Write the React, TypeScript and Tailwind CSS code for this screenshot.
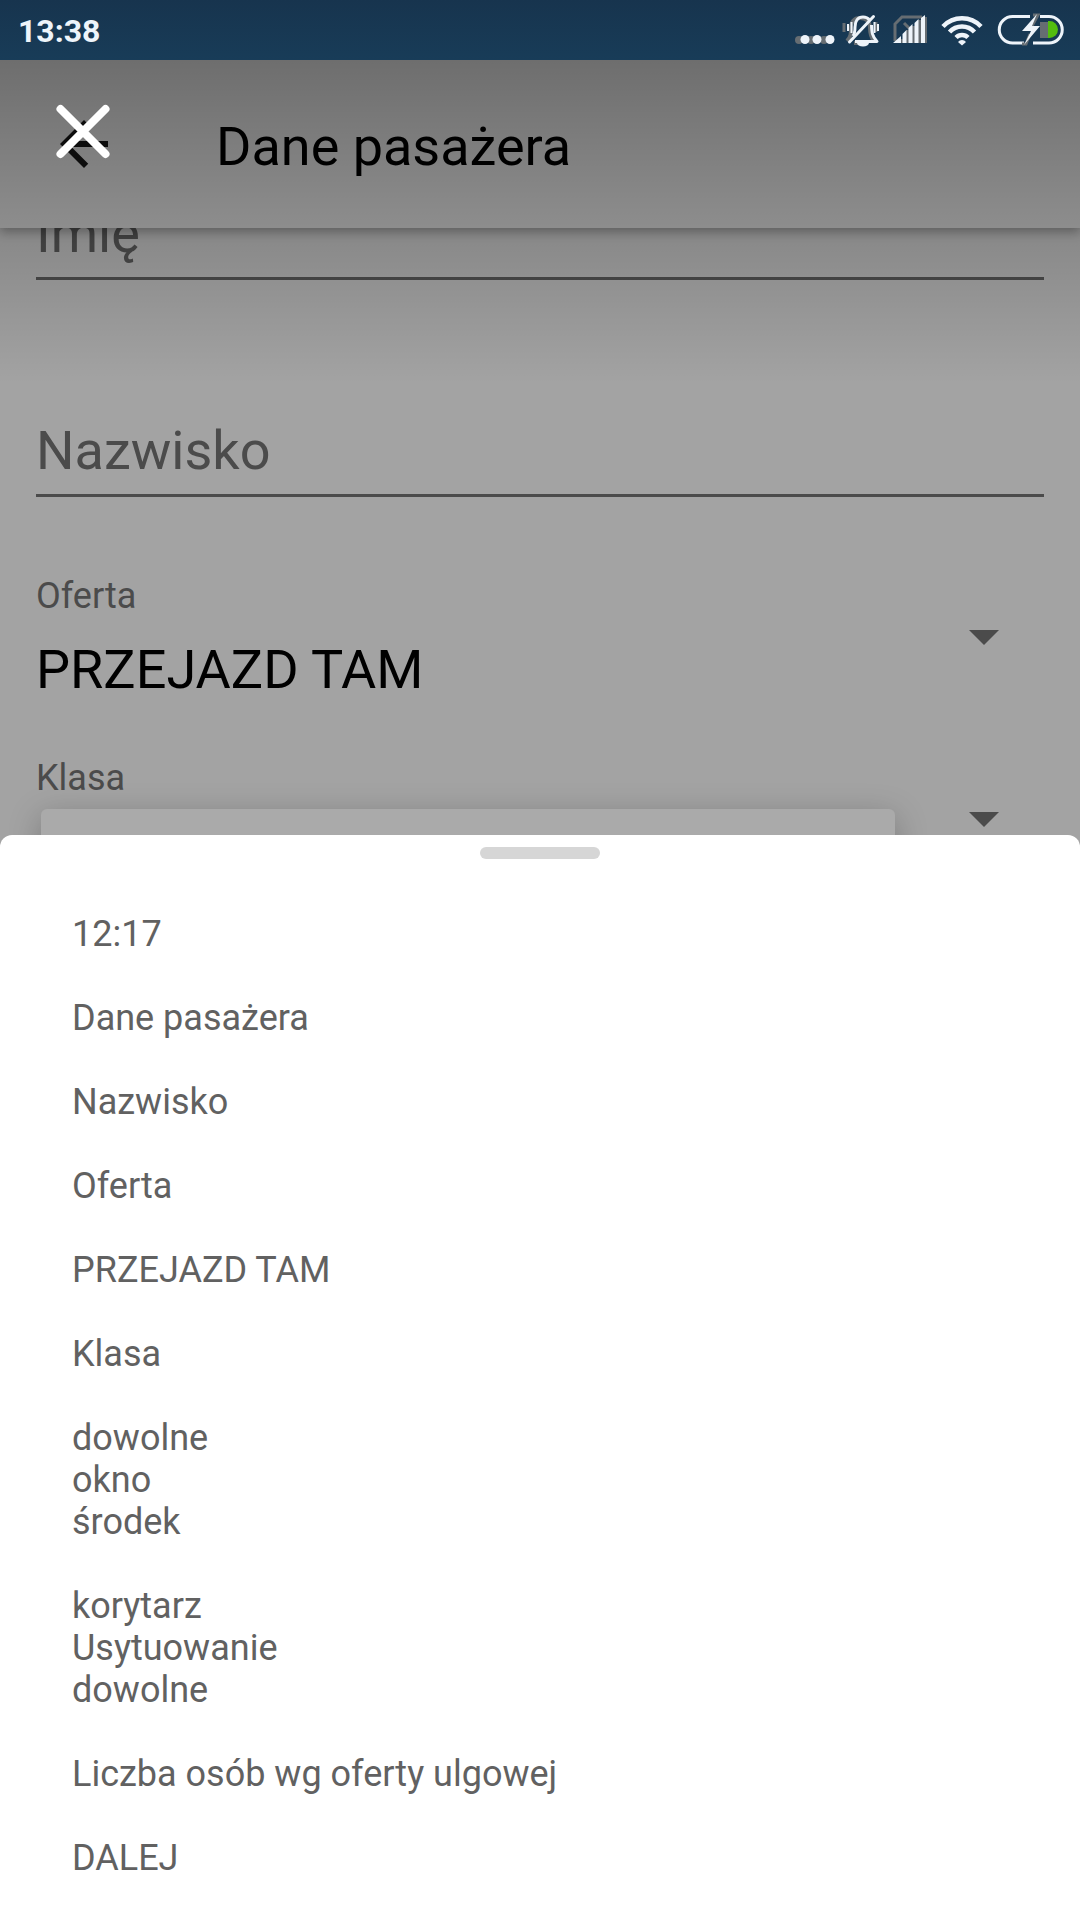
import { useState } from 'react';

interface SelectFieldProps {
  id: string;
  label: string;
  value: string;
}

const SHEET_BLOCKS = [
  ['12:17'],
  ['Dane pasażera'],
  ['Nazwisko'],
  ['Oferta'],
  ['PRZEJAZD TAM'],
  ['Klasa'],
  ['dowolne', 'okno', 'środek'],
  ['korytarz', 'Usytuowanie', 'dowolne'],
  ['Liczba osób wg oferty ulgowej'],
  ['DALEJ'],
];

function StatusIcons() {
  return (
    <div className="flex items-center gap-3.5" aria-hidden>
      <svg width="40" height="60" viewBox="0 0 40 60">
        <g fill="#666d72">
          <circle cx="4" cy="40" r="4" />
          <circle cx="16" cy="40" r="4" />
          <circle cx="29" cy="40" r="4" />
        </g>
        <g fill="#eef4fa">
          <circle cx="10" cy="39.5" r="4.500" />
          <circle cx="22" cy="39.5" r="4.500" />
          <circle cx="35" cy="39.5" r="4.500" />
        </g>
      </svg>
      <svg width="30" height="60" viewBox="8 0 30 60" className="overflow-visible" fill="none">
        <g stroke="#666d72" strokeWidth="4">
          <path d="M6 41c4-4 4-8 4-13 0-6 3-10 9-10s10 4 10 10c0 5 1 9 4 13" />
          <path d="M3 23v9M35 22v10" strokeWidth="3" />
          <path d="M13 43h8" strokeWidth="4" />
        </g>
        <g stroke="#eef4fa" strokeWidth="3" strokeLinejoin="round">
          <path d="M12 36c2-3 2-6 2-9 0-6 3-10 8-10 3 0 5 1 6.500 3M30.500 25c.3 7 .5 11 5.500 16.500H14" />
          <path d="M8.500 42 32.500 16.500" strokeLinecap="round" />
          <path d="M7 24v7M10.500 22v11M33.500 22v11M37 24v7" strokeWidth="2" />
        </g>
        <path d="M16 43h12a6 3.500 0 0 1-12 0z" fill="#eef4fa" />
      </svg>
      <svg width="34" height="60" viewBox="0 0 34 60">
        <path d="M2 41V24l7-7h20M11 23l6 6" fill="none" stroke="#666d72" strokeWidth="3" />
        <path d="M5 39h6v4H5zM13 30h3v13h-3zM19 26h4v17h-4zM25 20h4v23h-4zM31 17h3v26h-3z" fill="#666d72" />
        <path d="M0 43l8-7v7zM9.500 34l4-4v13h-4zM15.500 28l4-4v19h-4zM21.500 23l4-4v24h-4zM28 18l4-3v28h-4z" fill="#eef4fa" />
      </svg>
      <svg width="42" height="60" viewBox="0 0 42 60" fill="none" stroke="#eef4fa" strokeWidth="4.500">
        <path d="M2 26.500a26 26 0 0 1 38 0M8.500 32a17 17 0 0 1 25 0M15 37.500a8.500 8.500 0 0 1 12 0" />
        <path d="M21 45.500l-4-3.500a5 5 0 0 1 8 0z" fill="#eef4fa" stroke="none" />
      </svg>
      <svg width="68" height="60" viewBox="0 0 68 60" fill="none">
        <path
          d="M33 16.500H15.500a13 13 0 0 0 0 26.500H27M43 16.500h9a13 13 0 0 1 0 26.500H36"
          stroke="#eef4fa"
          strokeWidth="3"
        />
        <path d="M43 22h8v16h-8z" fill="#666d72" />
        <path d="M51 21h1.500a8.500 8.500 0 0 1 0 17H51z" fill="#53bd0f" />
        <path d="M36 15h5l-6 11M33 34l-4 10h-4" stroke="#666d72" strokeWidth="3" />
        <path d="M40 14 25 31h9l-7 14 16-19h-8z" fill="#eef4fa" />
      </svg>
    </div>
  );
}

function TextField({ name }: { name: string }) {
  return (
    <input
      type="text"
      name={name}
      aria-label={name}
      placeholder={name}
      className="block h-[79px] w-full shrink-0 border-b-3 border-[#4b4b4b] bg-transparent pb-3 text-[54px] leading-[64px] text-black outline-none placeholder:text-[#4b4b4b]"
    />
  );
}

function SelectField({ id, label, value }: SelectFieldProps) {
  return (
    <div className="flex shrink-0 items-start pr-[45px]">
      <div className="min-w-0 flex-1">
        <label htmlFor={id} className="block text-4xl leading-[42px] text-[#4b4b4b]">
          {label}
        </label>
        <select id={id} className="mt-[21px] block h-16 w-full appearance-none bg-transparent text-[54px] leading-[64px] text-black outline-none">
          <option>{value}</option>
        </select>
      </div>
      <svg width="30" height="15" viewBox="0 0 30 15" className="mt-[55px] shrink-0" aria-hidden>
        <path d="M0 0h30L15 15z" fill="#4b4b4b" />
      </svg>
    </div>
  );
}

export default function App() {
  const [open, setOpen] = useState(true);

  return (
    <div className="relative flex h-screen flex-col overflow-hidden bg-[#a3a3a3] font-['Roboto',sans-serif]">
      <div className="relative z-30 flex h-[60px] shrink-0 items-center justify-between bg-linear-to-b from-[#17344e] to-[#183c58] pr-[15px] pl-[18px]">
        <span className="pt-0.5 text-[32px] font-bold text-[#eef4fa]">13:38</span>
        <StatusIcons />
      </div>

      <header className="relative z-10 flex h-[168px] shrink-0 items-center bg-[#aaaaaa] pl-12 shadow-[0_4px_10px_rgba(0,0,0,0.3)]">
        <button type="button" aria-label="Wstecz" className="h-[72px] w-[72px]">
          <svg width="72" height="72" viewBox="0 0 24 24" aria-hidden>
            <path d="M20 11H7.830l5.590-5.590L12 4l-8 8 8 8 1.410-1.410L7.830 13H20v-2z" fill="#111111" />
          </svg>
        </button>
        <h1 className="ml-24 pt-1.5 text-[54px] leading-[64px] text-black">Dane pasażera</h1>
      </header>

      <main className="flex min-h-0 flex-1 flex-col overflow-hidden px-9">
        {/* scrolled up under the header */}
        <div className="-mt-[27px] flex shrink-0 flex-col gap-[138px]">
          <TextField name="Imię" />
          <TextField name="Nazwisko" />
        </div>
        <div className="mt-[78px] flex shrink-0 flex-col gap-[55px]">
          <SelectField id="offer" label="Oferta" value="PRZEJAZD TAM" />
          <div className="relative">
            <SelectField id="travel-class" label="Klasa" value="1" />
            <div className="absolute top-[52px] right-[149px] left-[5px] h-40 rounded-md bg-[#aaaaaa] shadow-[0_8px_32px_rgba(0,0,0,0.25)]" />
          </div>
        </div>
      </main>

      {open ? (
        <>
          <div className="pointer-events-none absolute inset-x-0 top-0 z-20 h-96 bg-linear-to-b from-black/42 to-transparent" />
          <button type="button" aria-label="Zamknij" onClick={() => setOpen(false)} className="absolute top-[95px] left-[47px] z-30 h-18 w-18">
            <svg width="72" height="72" viewBox="0 0 72 72" fill="none" stroke="#ffffff" strokeWidth="8" strokeLinecap="round" aria-hidden>
              <path d="M13.500 14l45 45M58.500 14l-45 45" />
            </svg>
          </button>
          <section className="absolute inset-x-0 bottom-0 z-30 rounded-t-xl bg-white px-[72px] pt-3 pb-[41px]">
            <div className="mx-auto h-3 w-[120px] rounded-full bg-[#d6d6d6]" />
            <div className="mt-[54px] flex flex-col gap-[42px] text-4xl leading-[42px] text-[#616161]">
              {SHEET_BLOCKS.map((lines, index) => (
                <div key={index}>
                  {lines.map((line) => (
                    <p key={line}>{line}</p>
                  ))}
                </div>
              ))}
            </div>
          </section>
        </>
      ) : null}
    </div>
  );
}
